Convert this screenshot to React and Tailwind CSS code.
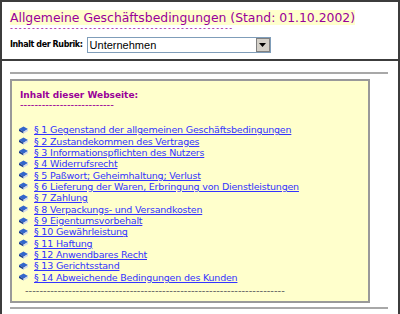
import React from 'react';

const ITEMS = [
  '§ 1 Gegenstand der allgemeinen Geschäftsbedingungen',
  '§ 2 Zustandekommen des Vertrages',
  '§ 3 Informationspflichten des Nutzers',
  '§ 4 Widerrufsrecht',
  '§ 5 Paßwort; Geheimhaltung; Verlust',
  '§ 6 Lieferung der Waren, Erbringung von Dienstleistungen',
  '§ 7 Zahlung',
  '§ 8 Verpackungs- und Versandkosten',
  '§ 9 Eigentumsvorbehalt',
  '§ 10 Gewährleistung',
  '§ 11 Haftung',
  '§ 12 Anwendbares Recht',
  '§ 13 Gerichtsstand',
  '§ 14 Abweichende Bedingungen des Kunden',
];

function BookIcon() {
  return (
    <svg width="9" height="8" viewBox="0 0 10 8" className="shrink-0">
      <path d="M0 3 L5 0 L10 3 L5 6 Z" fill="#3366cc" />
      <path d="M0 3 L5 6 L5 8 L0 5 Z" fill="#1a3c8c" />
      <path d="M5 6 L10 3 L10 5 L5 8 Z" fill="#cfd8ee" />
    </svg>
  );
}

export default function App() {
  return (
    <div className="w-[400px] h-[314px] overflow-hidden bg-white border-t-2 border-x-2 border-[#3c3c3c] font-['DejaVu_Sans',Verdana,sans-serif]">
      {/* Kopfbereich */}
      <div className="h-[59px] border-b-2 border-[#3c3c3c] pl-2 pt-[7px]">
        <div className="leading-[16px] h-[16px]">
          <span className="bg-[#ffffcc] text-[#990099] text-[12.4px] leading-[16px]">
            Allgemeine Geschäftsbedingungen (Stand: 01.10.2002)
          </span>
        </div>
        <div className="text-[#990099] text-[8px] leading-[8px] h-[8px] tracking-[1.5px] whitespace-nowrap">
          ---------------------------------------------------
        </div>
        <div className="flex items-center mt-[4px] gap-1">
          <span className="text-[8px] font-bold text-black tracking-[-0.4px]">Inhalt der Rubrik:</span>
          <div className="w-[184px] h-[16px] border border-[#7f9db9] flex items-center bg-white">
            <span className="flex-1 pl-[2px] text-[11px] font-['Liberation_Sans',Arial,sans-serif] leading-none">Unternehmen</span>
            <div className="w-[14px] h-[14px] bg-[#d4d0c8] border border-[#808080] flex items-center justify-center">
              <svg width="7" height="4" viewBox="0 0 7 4"><path d="M0 0 H7 L3.5 4 Z" fill="#000" /></svg>
            </div>
          </div>
        </div>
      </div>

      {/* Inhalt */}
      <div className="px-2 pt-[11px]">
        <div className="h-[2px] bg-[#a8a8a8] mr-[2px]" />
        <div className="mt-[5px] w-[360px] h-[224px] bg-[#ffffcc] border-2 border-[#999999] pl-[7px] pt-[8px]">
          <div className="text-[#990099] text-[9px] font-bold leading-[12px] pl-[1px]">Inhalt dieser Webseite:</div>
          <div className="text-[#990099] text-[10px] leading-[8px] h-[8px] pl-[1px] whitespace-nowrap">--------------------------</div>
          <ul className="mt-[15px]">
            {ITEMS.map((t) => (
              <li key={t} className="flex items-center gap-[6px] h-[11.36px]">
                <BookIcon />
                <a href="#" className="text-[#3333ff] underline text-[9.5px] tracking-[-0.2px] leading-[11px] whitespace-nowrap">{t}</a>
              </li>
            ))}
          </ul>
          <div className="text-[#666666] text-[10px] leading-[8px] mt-[4px] pl-[6px] h-[8px] whitespace-nowrap">
            ------------------------------------------------------------------------
          </div>
        </div>
        <div className="mt-[4px] h-[2px] bg-[#a8a8a8] mr-[2px]" />
      </div>
    </div>
  );
}
